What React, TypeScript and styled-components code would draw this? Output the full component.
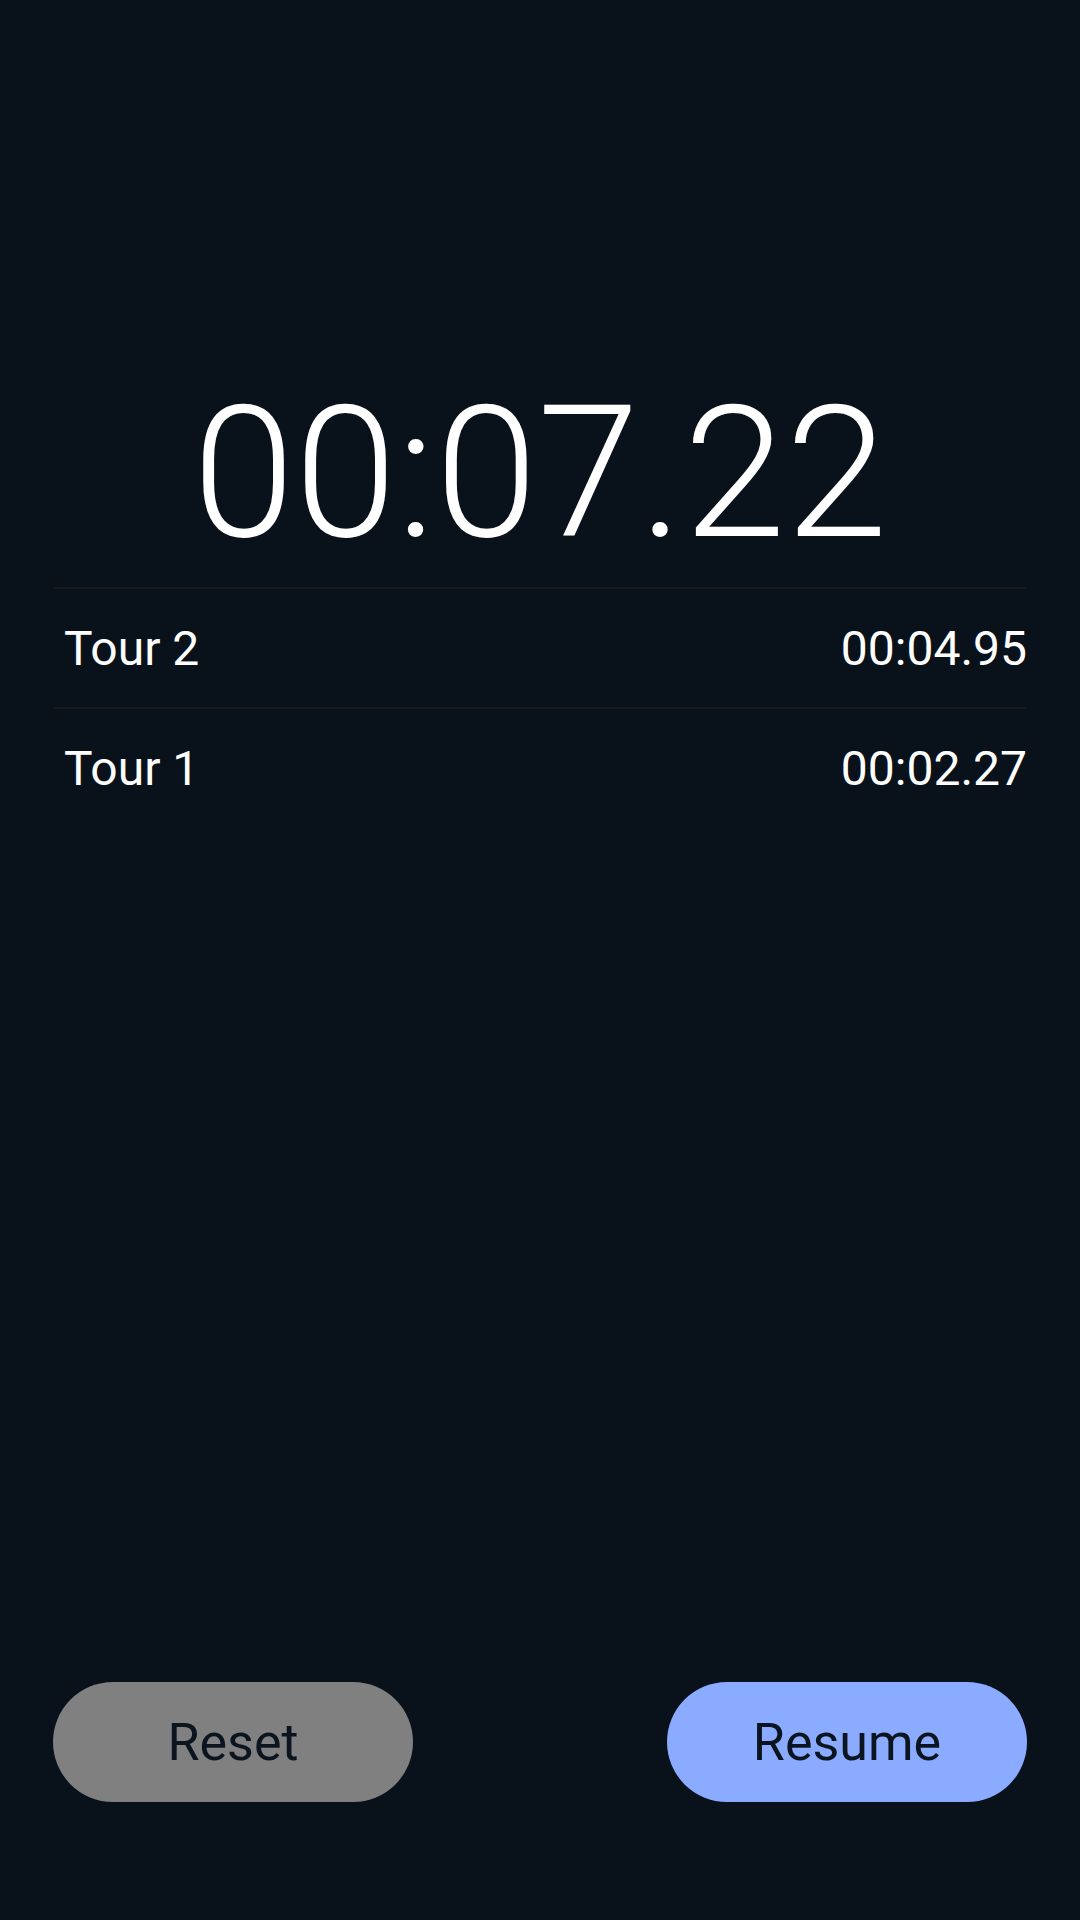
import styled, { createGlobalStyle } from 'styled-components';

const LAPS = [
  { id: 2, label: 'Tour 2', time: '00:04.95' },
  { id: 1, label: 'Tour 1', time: '00:02.27' },
];

const GlobalStyle = createGlobalStyle`
  html, body {
    margin: 0;
    padding: 0;
    background-color: #09111a;
  }
  * {
    box-sizing: border-box;
  }
`;

const App = () => {
  return (
    <>
      <GlobalStyle />
      <StyledPage>
        <StyledClock>00:07.22</StyledClock>
        <StyledLapList>
          {LAPS.map(({ id, label, time }) => (
            <StyledLapRow key={id}>
              <StyledLapLabel>{label}</StyledLapLabel>
              <StyledLapTime>{time}</StyledLapTime>
            </StyledLapRow>
          ))}
        </StyledLapList>
        <StyledSpacer />
        <StyledControls>
          <StyledButton $variant="secondary">Reset</StyledButton>
          <StyledButton $variant="primary">Resume</StyledButton>
        </StyledControls>
      </StyledPage>
    </>
  );
};

const StyledPage = styled.div`
  display: flex;
  flex-direction: column;
  width: 1080px;
  min-height: 1920px;
  padding: 0 53px 118px;
  background-color: #09111a;
  font-family: Roboto, 'Liberation Sans', sans-serif;
  color: #ffffff;
`;

const StyledClock = styled.div`
  margin-top: 381px;
  font-size: 184px;
  font-weight: 300;
  line-height: 1;
  text-align: center;
`;

const StyledLapList = styled.ul`
  list-style: none;
  margin: 22px 0 0;
  padding: 0;
`;

const StyledLapRow = styled.li`
  display: flex;
  justify-content: space-between;
  align-items: center;
  height: 120px;
  border-top: 2px solid #1a1a1d;
  font-size: 48px;
  font-weight: 400;
`;

const StyledLapLabel = styled.span`
  padding-left: 11px;
`;

const StyledLapTime = styled.span``;

const StyledSpacer = styled.div`
  flex: 1;
`;

const StyledControls = styled.div`
  display: flex;
  justify-content: space-between;
`;

const StyledButton = styled.button<{ $variant: 'primary' | 'secondary' }>`
  width: 360px;
  height: 120px;
  border: none;
  border-radius: 60px;
  font-family: Roboto, 'Liberation Sans', sans-serif;
  font-size: 52px;
  font-weight: 400;
  color: #0b1520;
  background-color: ${({ $variant }) =>
    $variant === 'primary' ? '#8aabff' : '#808080'};
  cursor: pointer;
`;

export default App;
